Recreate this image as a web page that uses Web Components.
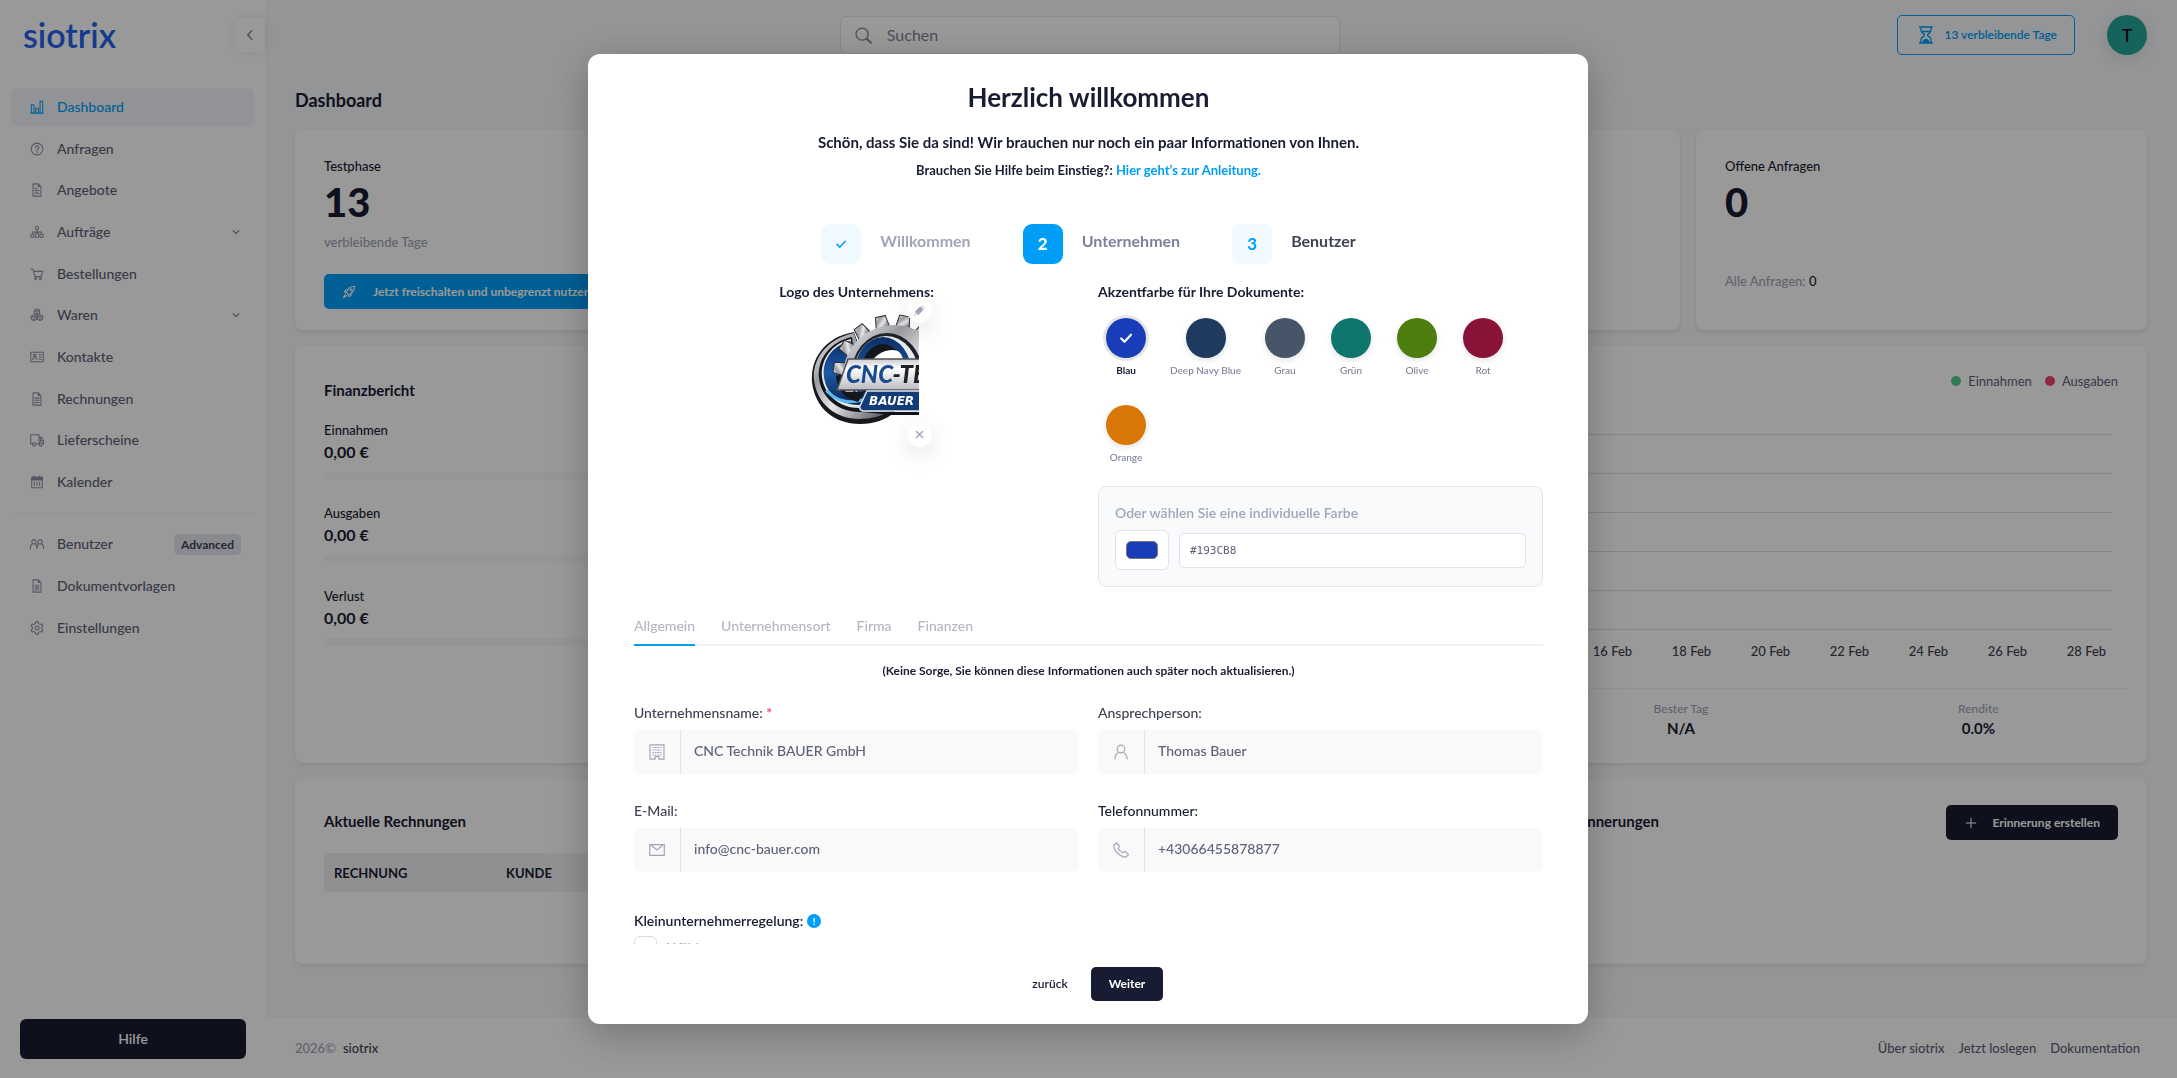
<!DOCTYPE html>
<html lang="de">
<head>
<meta charset="utf-8">
<title>siotrix – Dashboard</title>
<style>
  html, body { margin: 0; height: 100%; }
  body { font: 500 14px/20px Lato, "Open Sans", sans-serif; color: #181c32; background: #f5f8fa; overflow: hidden; }
</style>
</head>
<body>
<sx-app></sx-app>
<script>
const BASE = `
  *, *::before, *::after { box-sizing: border-box; }
  h1, h2, h3, p, ul { margin: 0; padding: 0; font-size: inherit; font-weight: inherit; }
  ul { list-style: none; }
  a { color: inherit; text-decoration: none; }
  button, input { font: inherit; color: inherit; }
  button { border: 0; background: none; padding: 0; cursor: pointer; }
`;
function define(name, css, render) {
  customElements.define(name, class extends HTMLElement {
    constructor() { super(); this.attachShadow({ mode: 'open' }); }
    connectedCallback() {
      if (this.shadowRoot.childNodes.length) return;
      const t = document.createElement('template');
      t.innerHTML = `<style>${BASE}${css}</style>${typeof render === 'function' ? render(this) : render}`;
      this.shadowRoot.append(t.content.cloneNode(true));
    }
  });
}

/* ---------- icons ---------- */
const doc = '<path d="M3.5 1h6l3 3v11h-9zM9.5 1v3h3"/>';
const ICONS = {
  chart: '<path d="M1 15h14M1.5 15V5.500h3V15M6.500 15V9.500h3V15M11.500 15V1.500h3V15"/>',
  help: '<circle cx="8" cy="8" r="6.700"/><path d="M6 6.500a2 2 0 1 1 2.800 1.800c-.6.3-.8.6-.8 1.200M8 11v1"/>',
  offer: doc + '<path d="M5.500 6h3M5.500 8.500h5M5.500 12l2-2 1 2h2"/>',
  tree: '<circle cx="8" cy="3.300" r="1.800"/><path d="M8 5v4M3 10V8h10v2M1 10.500h3.500V14H1zM6.300 9.500h3.500V14H6.300zM11.500 10.500H15V14h-3.500z"/>',
  cart: '<path d="M1 2.500h2.500l2 8.500h7.500l1.500-6H4.200"/><circle cx="6.500" cy="13.500" r="1.100"/><circle cx="12" cy="13.500" r="1.100"/>',
  boxes: '<path d="M8 1l3 1.500V6L8 7.500 5 6V2.500zM4.500 7.800l3 1.500v3.500l-3 1.500-3-1.500V9.300zM11.500 7.800l3 1.500v3.500l-3 1.500-3-1.500V9.300zM5 2.500L8 4l3-1.500M8 4v3.500M1.500 9.300l3 1.500 3-1.500M8.500 9.300l3 1.500 3-1.500M4.500 10.800v3.500M11.500 10.800v3.500"/>',
  card: '<path d="M.8 2.500h14.400v11H.8z"/><circle cx="5.500" cy="6.500" r="1.500"/><path d="M3 11c.3-3 4.700-3 5 0M10.500 5.500h2.500M10.500 8h2.500M10.500 10.500h2.500"/>',
  invoice: doc + '<path d="M5.500 7h5M5.500 9.500h5M5.500 12h5"/>',
  truck: '<path d="M2.500 12.500H.8V2h9.500v10.500H6.700M10.500 5h2.700l2.300 3.500v4h-1.200M10.500 12.500h-.3M12 5v4h3.500"/><circle cx="4.500" cy="13" r="1.700"/><circle cx="12.200" cy="13" r="1.700"/>',
  calendar: '<path d="M2 2.500h12v12H2zM2 5.500h12M5 1v2.500M11 1v2.500M5 8v4M8 8v4M11 8v4"/><path d="M2 2.500h12v3H2z" fill="currentColor"/>',
  users: '<circle cx="4.500" cy="5.500" r="2.500"/><circle cx="11.500" cy="5.500" r="2.500"/><path d="M.3 13.500c0-3.500 1-4.700 2.500-5.500M15.700 13.500c0-3.500-1-4.700-2.500-5.500M6.200 8c1.200.8 1.800 2 1.800 5 0-3 .6-4.200 1.800-5"/>',
  doc: doc + '<path d="M6 7h4v5.500H6z" fill="currentColor" opacity=".6"/>',
  gear: '<path d="M6.600 1h2.800l.5 2 1.500.9 2-.6 1.400 2.400-1.500 1.400v1.800l1.500 1.400-1.400 2.400-2-.6-1.500.9-.5 2H6.600l-.5-2-1.500-.9-2 .6-1.400-2.400 1.500-1.400V7.100L1.200 5.700l1.400-2.400 2 .6L6.100 3z"/><circle cx="8" cy="8" r="2.300"/>',
  left: '<path d="M10 3L5.500 8l4.500 5"/>',
  down: '<path d="M3.500 6L8 10.500 12.500 6"/>',
  search: '<circle cx="6.700" cy="6.700" r="5.700"/><path d="M10.800 10.800l4.200 4.200" stroke-width="1.800"/>',
  rocket: '<path d="M5 8.500C6.500 4 9.500 1.500 14.500 1.500c0 5-2.500 8-7 9.500zM5 8.500L2.500 8l2-2.500 2 .2M7.500 11l.5 2.500 2.500-2-.2-2M4 10.500l-2.500 4 4-2.500"/><circle cx="10.500" cy="5.500" r="1.200"/>',
  hourglass: '<path d="M1.500 0h13M1.500 16h13M3 0v3.500C3 6 6.500 6.500 6.500 8S3 10 3 12.500V16M13 0v3.500C13 6 9.500 6.500 9.500 8s3.500 2 3.500 4.500V16M4 4.500h8"/><path d="M5 15.500c0-2 2-3 3-3s3 1 3 3z" fill="currentColor"/>',
  plus: '<path d="M8 2.500v11M2.500 8h11"/>',
  check: '<path d="M2.500 8.500l3.800 3.800 7.400-8"/>',
  building: '<path d="M1 .8h14v14.400h-5v-2.500H6v2.500H1z"/><path d="M3.500 3.500h9M3.500 6h9M3.500 8.500h9M3.500 11h9" stroke-linecap="butt" stroke-dasharray="1.700 .700"/>',
  mail: '<path d="M.7 2.700h14.600v10.600H.7zM2.500 3.500l5.500 4.500 5.500-4.500"/>',
  person: '<circle cx="8" cy="5" r="3.800"/><path d="M1.800 15c0-4 2.200-5.500 3.500-6.500M14.200 15c0-4-2.200-5.500-3.500-6.500"/>',
  phone: '<path d="M.8 3.200L3.500.8 6.500 4 5.200 6.200c.8 1.800 2.700 3.700 4.500 4.500L12 9.400l3.400 3.100-2.500 2.700C8 15.500.3 8.500.8 3.200z"/>',
  pencil: '<path d="M3 9.500L9 3.500l3.500 3.500L6.500 13z" fill="currentColor"/><path d="M10 2.500l1.200-1 3.300 3.300-1 1.200z" fill="currentColor" opacity=".5" stroke="none"/><path d="M2 11.500l2.500 2.500-3 .5z" fill="currentColor" opacity=".6" stroke="none"/>',
  cross: '<path d="M2.500 2.500l11 11M13.500 2.500l-11 11" stroke-width="2.600"/>'
};
define('sx-icon', `:host { display: inline-flex; flex: none; width: 14px; height: 14px; }
  svg { width: 100%; height: 100%; overflow: visible; }`,
  el => `<svg viewBox="0 0 16 16" fill="none" stroke="currentColor" stroke-width="${el.getAttribute('weight') || 1.2}" stroke-linecap="round" stroke-linejoin="round" aria-hidden="true">${ICONS[el.getAttribute('name')]}</svg>`);

/* ---------- sidebar ---------- */
define('sx-nav-item', `
  :host { display: block; }
  a { display: flex; align-items: center; height: 38px; padding: 0 13px 0 19px; border-radius: 6px; color: #5e6278; }
  sx-icon { color: #8c90a6; }
  .text { flex: 1; margin-left: 13px; }
  :host([active]) a { background: #f4f6fa; color: #009ef7; }
  :host([active]) sx-icon { color: #009ef7; }
  .chev { width: 10px; height: 10px; }`,
  el => `<a href="#"><sx-icon name="${el.getAttribute('icon')}"></sx-icon><span class="text"><slot></slot></span>
    <slot name="badge"></slot>${el.hasAttribute('expandable') ? '<sx-icon class="chev" name="down" weight="2"></sx-icon>' : ''}</a>`);

define('sx-sidebar', `
  :host { display: flex; flex-direction: column; width: 265px; flex: none; background: #fff; }
  header { display: flex; align-items: center; justify-content: space-between; height: 70px; padding-left: 23px; }
  .brand { font-size: 34px; line-height: 38px; font-weight: 600; color: #2563eb; }
  .toggle { display: flex; align-items: center; justify-content: center; width: 30px; height: 34px; border-radius: 6px 0 0 6px; color: #7e8299; box-shadow: 0 0 10px rgba(0,0,0,.08); }
  ul { display: flex; flex-direction: column; justify-content: space-between; margin: 0 11px; }
  .main { height: 413px; margin-top: 18px; }
  .more { height: 134px; margin-top: 12px; padding-top: 11px; border-top: 1px solid #eff2f5; }
  .badge { font-size: 12px; line-height: 21px; font-weight: 700; padding: 0 7px; border-radius: 5px; background: #e4e6ef; color: #3f4254; }
  .help { margin: auto 19px 19px 20px; height: 40px; border-radius: 6px; background: #181c32; color: #fff; font-weight: 600; }`,
  `<header><a class="brand" href="#">siotrix</a><button class="toggle" aria-label="Menü einklappen"><sx-icon name="left" weight="1.600"></sx-icon></button></header>
  <ul class="main">
    <li><sx-nav-item icon="chart" active>Dashboard</sx-nav-item></li>
    <li><sx-nav-item icon="help">Anfragen</sx-nav-item></li>
    <li><sx-nav-item icon="offer">Angebote</sx-nav-item></li>
    <li><sx-nav-item icon="tree" expandable>Aufträge</sx-nav-item></li>
    <li><sx-nav-item icon="cart">Bestellungen</sx-nav-item></li>
    <li><sx-nav-item icon="boxes" expandable>Waren</sx-nav-item></li>
    <li><sx-nav-item icon="card">Kontakte</sx-nav-item></li>
    <li><sx-nav-item icon="invoice">Rechnungen</sx-nav-item></li>
    <li><sx-nav-item icon="truck">Lieferscheine</sx-nav-item></li>
    <li><sx-nav-item icon="calendar">Kalender</sx-nav-item></li>
  </ul>
  <ul class="more">
    <li><sx-nav-item icon="users">Benutzer<span class="badge" slot="badge">Advanced</span></sx-nav-item></li>
    <li><sx-nav-item icon="doc">Dokumentvorlagen</sx-nav-item></li>
    <li><sx-nav-item icon="gear">Einstellungen</sx-nav-item></li>
  </ul>
  <button class="help">Hilfe</button>`);

/* ---------- dashboard ---------- */
define('sx-topbar', `
  :host { display: grid; grid-template-columns: 27fr 500px 40fr; align-items: start; padding: 15px 30px 0; height: 70px; }
  .search { grid-column: 2; display: flex; align-items: center; gap: 15px; height: 38px; margin-top: 1px; padding: 0 14px; border: 1px solid #e4e6ef; border-radius: 6px; background: #fff; color: #7e8299; }
  .search sx-icon { width: 17px; height: 17px; }
  .search input { flex: 1; min-width: 0; border: 0; background: none; outline: 0; font-size: 16px; font-weight: 400; padding: 0; }
  .search input::placeholder { color: #7e8299; opacity: 1; }
  .side { display: flex; justify-content: flex-end; gap: 32px; }
  .trial { display: flex; align-items: center; gap: 10px; height: 40px; padding: 0 17px 0 20px; border: 1px solid #009ef7; border-radius: 5px; color: #009ef7; font-size: 12px; font-weight: 600; }
  .trial sx-icon { width: 16px; height: 18px; }
  .avatar { width: 40px; height: 40px; border-radius: 50%; background: #26a69a; color: #000; font-size: 18px; font-weight: 400; box-shadow: 0 4px 16px rgba(0,0,0,.1); }`,
  `<label class="search"><sx-icon name="search"></sx-icon><input type="search" placeholder="Suchen" aria-label="Suchen"></label>
  <div class="side"><button class="trial"><sx-icon name="hourglass" weight="1.300"></sx-icon>13 verbleibende Tage</button><button class="avatar">T</button></div>`);

define('sx-card', `:host { display: block; min-width: 0; padding: 26px 29px; background: #fff; border-radius: 8px; box-shadow: 0 2px 4px rgba(0,0,0,.08); }`, '<slot></slot>');

define('sx-amount', `
  :host { display: block; }
  p { font-size: 13px; line-height: 20px; }
  strong { display: block; font-size: 16px; line-height: 24px; font-weight: 700; }
  div { height: 8px; margin: 8px 0 23px; border-radius: 4px; background: #f9f9f9; }`,
  '<p><slot></slot></p><strong>0,00 €</strong><div></div>');

define('sx-chart', `
  :host { display: block; }
  .legend { display: flex; justify-content: flex-end; gap: 13px; padding-right: 29px; font-size: 13px; line-height: 18px; font-weight: 400; color: #5e6278; }
  .legend span { display: flex; align-items: center; gap: 7px; }
  i { width: 10px; height: 10px; border-radius: 50%; background: #50cd89; }
  i.out { background: #f1416c; }
  .lines { margin: 44px 35px 0; border-bottom: 1px solid #e0e0e0; }
  .lines div { height: 39px; border-top: 1px solid #e0e0e0; }
  .days { display: flex; justify-content: flex-end; margin: 13px 21px 0; font-size: 13px; line-height: 16px; color: #3f4254; }
  .days span { width: 79px; text-align: center; }
  .sum { display: grid; grid-template-columns: repeat(4, 1fr); margin: 29px 20px 0; padding-top: 12px; border-top: 1px solid #eff2f5; text-align: center; }
  .sum p { font-size: 12px; line-height: 16px; color: #a1a5b7; }
  .sum strong { display: block; font-size: 15px; line-height: 22px; font-weight: 700; }
  .best { grid-column: 3; }`,
  `<div class="legend"><span><i></i>Einnahmen</span><span><i class="out"></i>Ausgaben</span></div>
  <div class="lines"><div></div><div></div><div></div><div></div><div></div></div>
  <div class="days"><span>16 Feb</span><span>18 Feb</span><span>20 Feb</span><span>22 Feb</span><span>24 Feb</span><span>26 Feb</span><span>28 Feb</span></div>
  <div class="sum"><div class="best"><p>Bester Tag</p><strong>N/A</strong></div><div><p>Rendite</p><strong>0.0%</strong></div></div>`);

define('sx-dashboard', `
  :host { display: block; flex: 1; padding: 0 30px; }
  h1 { font-size: 18px; line-height: 24px; font-weight: 700; margin: 18px 0 18px; }
  h2 { font-size: 15px; line-height: 24px; font-weight: 700; }
  .row { display: grid; grid-template-columns: repeat(3, 1fr); gap: 16px; margin-bottom: 16px; }
  .row.four { grid-template-columns: repeat(4, 1fr); }
  .four sx-card { height: 200px; display: flex; flex-direction: column; padding-bottom: 15px; font-size: 13px; }
  .mid > * { min-height: 417px; }
  .low > * { min-height: 185px; }
  .wide { grid-column: span 2; }
  .big { font-size: 40px; line-height: 48px; font-weight: 900; margin-top: 2px; }
  .muted { color: #a1a5b7; }
  .muted b { font-weight: 500; color: #181c32; }
  .days { margin-top: 6px; }
  .unlock { display: flex; align-items: center; gap: 17px; height: 35px; margin-top: auto; margin-bottom: 6px; padding: 0 18px; flex: none; border-radius: 5px; background: #009ef7; color: #fff; font-size: 12px; font-weight: 700; }
  .open { margin-top: auto; margin-bottom: 24px; }
  .finance h2 { margin: 6px 0 18px; }
  .chart { padding: 26px 0 0; }
  .low h2 { margin-top: 4px; }
  table { width: 100%; border-collapse: collapse; margin-top: 20px; font-size: 13px; background: #f1f1f2; }
  th { height: 39px; padding: 0 10px; text-align: left; font-weight: 700; width: 172px; }
  th:last-child { width: auto; }
  .head { display: flex; justify-content: space-between; align-items: start; }
  .head button { display: flex; align-items: center; gap: 14px; height: 35px; padding: 0 18px; border-radius: 5px; background: #181c32; color: #fff; font-size: 12px; font-weight: 700; }`,
  `<h1>Dashboard</h1>
  <div class="row four">
    <sx-card><p>Testphase</p><p class="big">13</p><p class="muted days">verbleibende Tage</p><button class="unlock"><sx-icon name="rocket"></sx-icon>Jetzt freischalten und unbegrenzt nutzen</button></sx-card>
    <sx-card></sx-card><sx-card></sx-card>
    <sx-card><p>Offene Anfragen</p><p class="big">0</p><p class="muted open">Alle Anfragen: <b>0</b></p></sx-card>
  </div>
  <div class="row mid">
    <sx-card class="finance"><h2>Finanzbericht</h2><sx-amount>Einnahmen</sx-amount><sx-amount>Ausgaben</sx-amount><sx-amount>Verlust</sx-amount></sx-card>
    <sx-card class="wide chart"><sx-chart></sx-chart></sx-card>
  </div>
  <div class="row low">
    <sx-card class="wide"><h2>Aktuelle Rechnungen</h2><table><thead><tr><th>RECHNUNG</th><th>KUNDE</th><th></th></tr></thead></table></sx-card>
    <sx-card><div class="head"><h2>Erinnerungen</h2><button><sx-icon name="plus"></sx-icon>Erinnerung erstellen</button></div></sx-card>
  </div>`);

define('sx-footer', `
  :host { display: flex; justify-content: space-between; align-items: center; height: 60px; padding: 0 37px 0 30px; background: #fff; font-size: 13px; color: #5e6278; }
  .copy { display: flex; gap: 7px; color: #a1a5b7; }
  .copy a { color: #3f4254; }
  nav { display: flex; gap: 14px; }`,
  `<div class="copy">2026© <a href="#">siotrix</a></div><nav><a href="#">Über siotrix</a><a href="#">Jetzt loslegen</a><a href="#">Dokumentation</a></nav>`);

/* ---------- welcome dialog ---------- */
define('sx-step', `
  :host { display: flex; gap: 19px; font-size: 16px; line-height: 34px; font-weight: 700; color: #3f4254; }
  .num { display: flex; align-items: center; justify-content: center; width: 40px; height: 40px; border-radius: 9px; background: #f1faff; color: #009ef7; font-size: 17px; font-weight: 700; }
  .num sx-icon { width: 12px; height: 12px; }
  :host([state=done]) { color: #a1a5b7; }
  :host([state=current]) { color: #7e8299; }
  :host([state=current]) .num { background: #009ef7; color: #fff; font-weight: 900; }`,
  el => `<span class="num">${el.getAttribute('state') === 'done' ? '<sx-icon name="check" weight="2"></sx-icon>' : el.getAttribute('num')}</span><slot></slot>`);

define('sx-swatch', `
  :host { display: block; }
  label { display: flex; flex-direction: column; align-items: center; min-width: 56px; padding: 8px 6px 10px; font-size: 10px; line-height: 12px; color: #7e8299; cursor: pointer; }
  input { appearance: none; position: absolute; opacity: 0; margin: 0; }
  .dot { display: flex; align-items: center; justify-content: center; width: 40px; height: 40px; margin-bottom: 6px; border-radius: 50%; color: transparent; box-shadow: 0 2px 6px rgba(0,0,0,.12); }
  .name { padding-bottom: 1px; }
  input:checked + .dot { color: #fff; box-shadow: 0 0 0 3px #e6e6e6; }
  input:checked ~ .name { color: #181c32; font-weight: 700; }`,
  el => `<label><input type="radio" name="accent" ${el.hasAttribute('selected') ? 'checked' : ''}><span class="dot" style="background:${el.getAttribute('color')}"><sx-icon name="check" weight="2.500"></sx-icon></span><span class="name"><slot></slot></span></label>`);

define('sx-company-logo', `
  :host { display: block; position: relative; width: 125px; height: 125px; }
  svg { display: block; width: 125px; height: 125px; overflow: hidden; }
  button { position: absolute; right: -13px; display: flex; align-items: center; justify-content: center; width: 25px; height: 25px; border-radius: 50%; background: #fff; color: #a1a5b7; box-shadow: 0 8px 24px rgba(0,0,0,.12); }
  button sx-icon { width: 13px; height: 13px; }
  .edit { top: -12px; }
  .del { bottom: -12px; }
  .del sx-icon { width: 9px; height: 9px; }`,
  () => {
    let teeth = '';
    for (let a = -82; a < 40; a += 23) teeth += `<path d="M-7 -48h14l-2 -13h-10z" transform="translate(100 66) rotate(${a})"/>`;
    return `<svg viewBox="0 0 125 125" role="img" aria-label="Firmenlogo">
    <defs>
      <linearGradient id="steel" x1="0" y1="0" x2="1" y2="1"><stop offset="0" stop-color="#f3f3f4"/><stop offset=".3" stop-color="#9a9ca1"/><stop offset=".55" stop-color="#e6e7ea"/><stop offset=".8" stop-color="#8a8c92"/><stop offset="1" stop-color="#4a4c52"/></linearGradient>
      <linearGradient id="blue" x1="0" y1="0" x2="0" y2="1"><stop offset="0" stop-color="#0c2e66"/><stop offset=".5" stop-color="#1a5aa8"/><stop offset="1" stop-color="#0b2550"/></linearGradient>
      <linearGradient id="plate" x1="0" y1="0" x2="0" y2="1"><stop offset="0" stop-color="#c9cbd0"/><stop offset=".3" stop-color="#fff"/><stop offset="1" stop-color="#b9bbc0"/></linearGradient>
      <clipPath id="upper"><path d="M0 0h125v82H0z"/></clipPath>
    </defs>
    <path d="M60 22C30 27 16 50 18 72c3 26 22 42 48 42 14 0 26-4 35-12L84 90z" fill="#17191f"/>
    <path d="M60 23C32 29 18 50 20 70c3 24 22 39 45 39 12 0 23-3 31-8L80 88z" fill="url(#steel)"/>
    <path d="M58 27C35 32 23 50 25 68c2 20 20 34 40 34 8 0 16-2 21-5L76 84 62 60z" fill="#15171d"/>
    <path d="M57 29C38 33 26 50 28 67c2 18 18 31 37 31 7 0 13-1 18-4L72 80 54 58z" fill="#e4e6ea"/>
    <path d="M56 31C38 36 28 50 30 67c2 17 17 28 35 28 7 0 12-1 17-4L72 80 54 58z" fill="url(#blue)"/>
    <path d="M33 81c9 10 22 13 35 9" fill="none" stroke="#5db9f2" stroke-width="3" stroke-linecap="round"/>
    <path d="M42 66c1 14 9 23 22 26l6-9-14-22z" fill="#15171d"/>
    <g clip-path="url(#upper)">
      <g fill="url(#steel)" stroke="#2c2e34" stroke-width="1">${teeth}</g>
      <circle cx="100" cy="66" r="51" fill="url(#steel)"/>
      <ellipse cx="93" cy="66" rx="36" ry="43" fill="#202229"/>
      <ellipse cx="92" cy="66" rx="33" ry="40" fill="#e8e9ec"/>
      <ellipse cx="89" cy="65" rx="29" ry="38" fill="url(#blue)"/>
      <ellipse cx="89" cy="66" rx="23" ry="32" fill="#14161c"/>
      <path d="M75 54c6-8 13-14 24-14 6 0 9 4 10 10z" fill="#fff"/>
    </g>
    <path d="M54 49h72v31H43z" fill="url(#plate)" stroke="#4d5057" stroke-width="1.500"/>
    <path d="M73 81h53v20H69q-4-1-3-5z" fill="#123b78" stroke="#dfe2e7" stroke-width="1.500"/>
    <path d="M68 102h58v3H98z" fill="#101318"/>
    <text x="52" y="73" font-family="Lato, sans-serif" font-size="24" font-weight="900" font-style="italic" fill="#174b8e">CNC<tspan fill="#1d2027">-TE</tspan></text>
    <text x="75" y="95" font-family="DejaVu Sans, sans-serif" font-size="12" font-weight="700" font-style="italic" fill="#fff">BAUER</text>
    </svg>
    <button class="edit" aria-label="Logo ändern"><sx-icon name="pencil"></sx-icon></button>
    <button class="del" aria-label="Logo entfernen"><sx-icon name="cross"></sx-icon></button>`;
  });

define('sx-field', `
  :host { display: block; min-width: 0; }
  label { display: block; color: #3f4254; }
  :host([strong]) label { color: #181c32; }
  em { color: #f1416c; font-style: normal; font-weight: 700; }
  .group { display: flex; height: 44px; margin-top: 7px; border-radius: 6px; background: #f9f9f9; overflow: hidden; }
  .addon { display: flex; align-items: center; justify-content: center; width: 47px; border-right: 1px solid #e0e1e8; color: #a1a5b7; }
  .addon sx-icon { width: 16px; height: 16px; }
  input { flex: 1; min-width: 0; border: 0; outline: 0; background: none; padding: 0 13px 2px; color: #5e6278; }`,
  el => `<label for="f">${el.getAttribute('label')}${el.hasAttribute('required') ? ' <em>*</em>' : ''}</label>
    <div class="group"><span class="addon"><sx-icon name="${el.getAttribute('icon')}"></sx-icon></span><input id="f" type="${el.getAttribute('type') || 'text'}" value="${el.getAttribute('value')}"></div>`);

define('sx-welcome', `
  :host { position: fixed; inset: 0; display: flex; justify-content: center; padding: 54px 21px 54px 20px; background: rgba(0,0,0,.4); }
  .modal { display: flex; flex-direction: column; width: 1000px; max-width: 100%; padding: 28px 45px 23px 46px; border-radius: 12px; background: #fff; box-shadow: 0 10px 40px rgba(0,0,0,.25); }
  .scroll { flex: 1; min-height: 0; overflow: hidden; }
  h1 { font-size: 26px; line-height: 30px; font-weight: 700; text-align: center; }
  .lead { margin-top: 18px; font-size: 15px; line-height: 24px; font-weight: 700; text-align: center; }
  .guide { margin-top: 6px; font-size: 13px; font-weight: 700; text-align: center; }
  .guide a { color: #009ef7; }
  .steps { display: flex; justify-content: center; gap: 52px; margin-top: 44px; }
  .cols { display: grid; grid-template-columns: 1fr 1fr; column-gap: 19px; }
  .brand { margin-top: 18px; }
  h3 { font-weight: 700; }
  .logo { display: flex; flex-direction: column; align-items: center; gap: 8px; }
  .swatches { display: flex; flex-wrap: wrap; gap: 10px; margin-top: 8px; }
  .custom { margin-top: 12px; padding: 16px; border: 1px solid #e4e6ef; border-radius: 8px; background: #f9fafc; }
  .custom > label { font-weight: 600; color: #a1a5b7; display: block; }
  .pick { display: flex; align-items: center; gap: 10px; margin-top: 7px; }
  input[type=color] { width: 54px; height: 40px; padding: 10px; border: 1px solid #e1e3ea; border-radius: 6px; background: #fff; }
  input[type=color]::-webkit-color-swatch-wrapper { padding: 0; }
  input[type=color]::-webkit-color-swatch { border: 1px solid #777; border-radius: 5px; }
  .hex { flex: 1; min-width: 0; height: 35px; padding: 0 10px; border: 1px solid #e1e3ea; border-radius: 5px; background: #fff; font: 11px "DejaVu Sans Mono", monospace; color: #5e6278; }
  .tabs { display: flex; gap: 26px; margin-top: 29px; border-bottom: 2px solid #f3f3f5; }
  .tabs button { height: 30px; margin-bottom: -2px; padding-bottom: 8px; border-bottom: 2px solid transparent; color: #b5b5c3; line-height: 20px; }
  .tabs .on { border-color: #009ef7; }
  .hint { margin-top: 16px; font-size: 12px; line-height: 18px; font-weight: 700; text-align: center; }
  .fields { margin-top: 23px; row-gap: 27px; }
  .small { display: flex; align-items: center; gap: 4px; margin-top: 39px; font-weight: 600; }
  .small button { width: 14px; height: 14px; border-radius: 50%; background: #009ef7; color: #fff; font-size: 10px; line-height: 14px; font-weight: 700; }
  .tick { display: flex; align-items: center; gap: 10px; margin-top: 5px; color: #a1a5b7; }
  .tick input { appearance: none; width: 23px; height: 23px; margin: 0; border: 1px solid #d8dae5; border-radius: 6px; }
  footer { display: flex; justify-content: center; gap: 5px; padding-top: 23px; font-size: 12px; }
  footer button { width: 72px; height: 34px; border-radius: 5px; font-weight: 600; }
  footer .next { background: #181c32; color: #fff; font-weight: 700; }`,
  `<div class="modal" role="dialog" aria-modal="true" aria-labelledby="t">
    <div class="scroll">
      <h1 id="t">Herzlich willkommen</h1>
      <p class="lead">Schön, dass Sie da sind! Wir brauchen nur noch ein paar Informationen von Ihnen.</p>
      <p class="guide">Brauchen Sie Hilfe beim Einstieg?: <a href="#">Hier geht’s zur Anleitung.</a></p>
      <div class="steps"><sx-step num="1" state="done">Willkommen</sx-step><sx-step num="2" state="current">Unternehmen</sx-step><sx-step num="3">Benutzer</sx-step></div>
      <div class="cols brand">
        <div class="logo"><h3>Logo des Unternehmens:</h3><sx-company-logo></sx-company-logo></div>
        <div><h3>Akzentfarbe für Ihre Dokumente:</h3>
          <div class="swatches">
            <sx-swatch color="#193cb8" selected>Blau</sx-swatch><sx-swatch color="#1e3a5f">Deep Navy Blue</sx-swatch><sx-swatch color="#475569">Grau</sx-swatch><sx-swatch color="#0f766e">Grün</sx-swatch><sx-swatch color="#4d7c0f">Olive</sx-swatch><sx-swatch color="#881337">Rot</sx-swatch><sx-swatch color="#d97706">Orange</sx-swatch>
          </div>
          <div class="custom"><label for="hex">Oder wählen Sie eine individuelle Farbe</label>
            <div class="pick"><input type="color" value="#193cb8" aria-label="Farbe wählen"><input class="hex" id="hex" type="text" value="#193CB8"></div></div>
        </div>
      </div>
      <div class="tabs" role="tablist"><button class="on" role="tab">Allgemein</button><button role="tab">Unternehmensort</button><button role="tab">Firma</button><button role="tab">Finanzen</button></div>
      <p class="hint">(Keine Sorge, Sie können diese Informationen auch später noch aktualisieren.)</p>
      <div class="cols fields">
        <sx-field label="Unternehmensname:" icon="building" value="CNC Technik BAUER GmbH" required></sx-field>
        <sx-field label="Ansprechperson:" icon="person" value="Thomas Bauer"></sx-field>
        <sx-field label="E-Mail:" icon="mail" type="email" value="info@cnc-bauer.com"></sx-field>
        <sx-field label="Telefonnummer:" icon="phone" type="tel" value="+43066455878877" strong></sx-field>
      </div>
      <div class="small">Kleinunternehmerregelung: <button aria-label="Information">!</button></div>
      <label class="tick"><input type="checkbox">Wählen</label>
    </div>
    <footer><button>zurück</button><button class="next">Weiter</button></footer>
  </div>`);

define('sx-app', `
  :host { display: flex; min-height: 100vh; }
  main { display: flex; flex-direction: column; flex: 1; min-width: 0; }`,
  `<sx-sidebar></sx-sidebar><main><sx-topbar></sx-topbar><sx-dashboard></sx-dashboard><sx-footer></sx-footer></main><sx-welcome></sx-welcome>`);
</script>
</body>
</html>
